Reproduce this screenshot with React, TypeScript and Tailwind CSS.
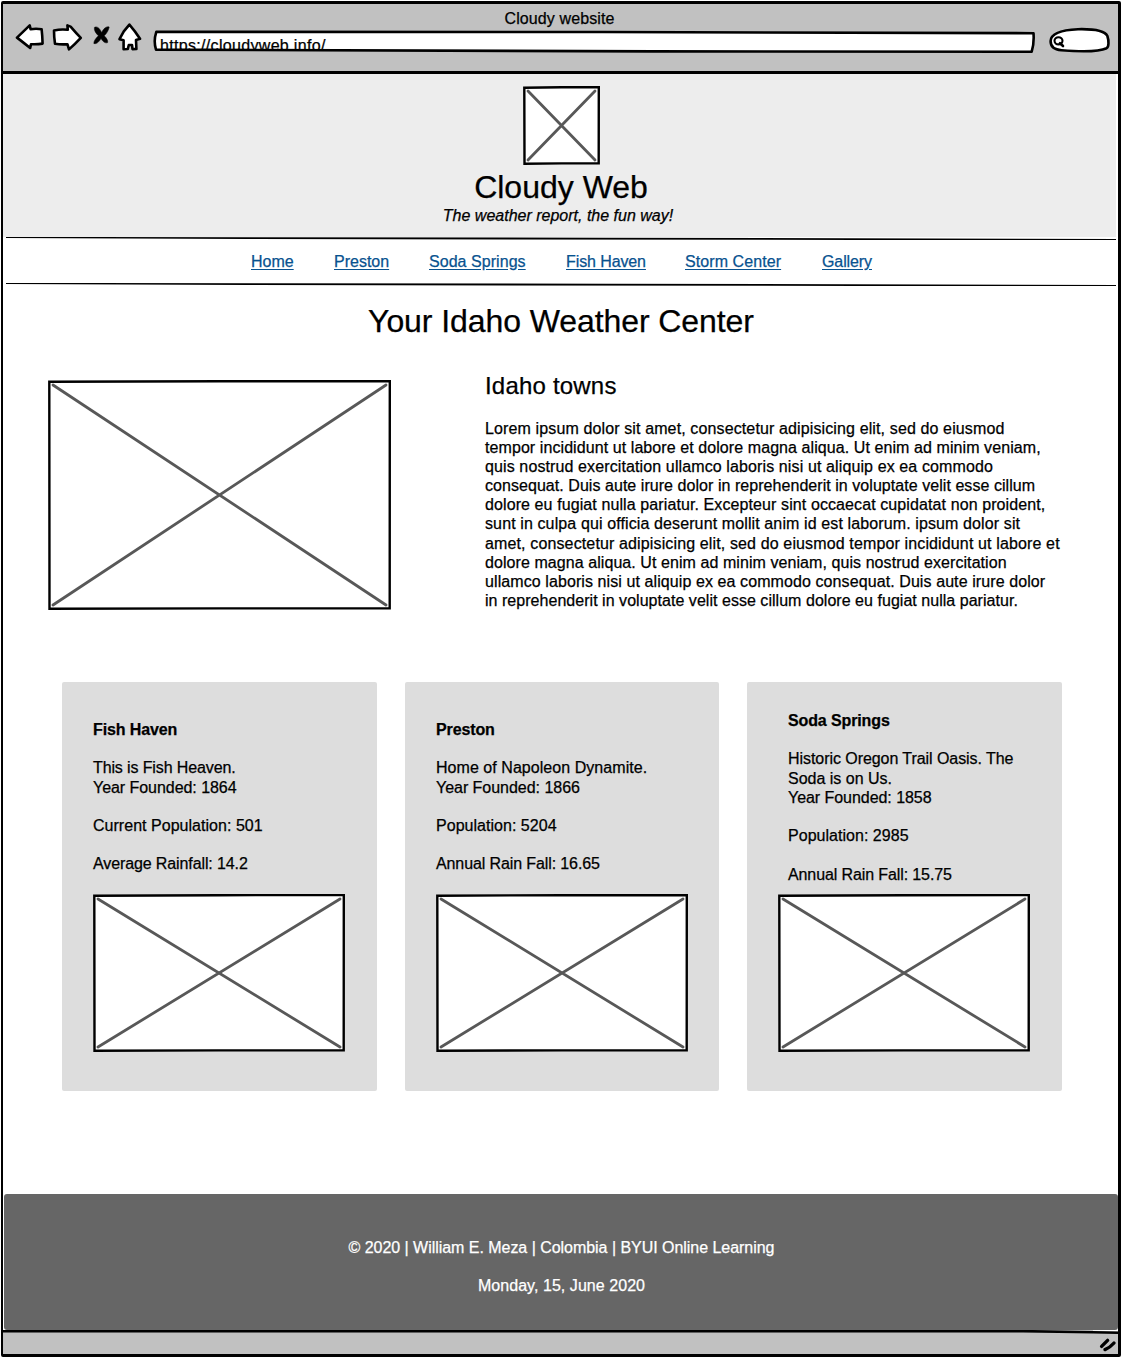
import React from "react";

const ink = { stroke: "#000", strokeWidth: 2.6, strokeLinejoin: "round", strokeLinecap: "round" } as const;

function Placeholder({ w, h, className = "" }: { w: number; h: number; className?: string }) {
  return (
    <svg width={w} height={h} viewBox={`0 0 ${w} ${h}`} className={`block shrink-0 ${className}`}>
      <path
        d={`M1.3 1.7 L${w / 2} 1.2 L${w - 1.2} 1.1 L${w - 1.3} ${h - 1.6} L${w / 2} ${h - 1.6} L1.5 ${h - 1.2} Z`}
        fill="#fff"
        stroke="#000"
        strokeWidth="2.4"
        strokeLinejoin="miter"
      />
      <path
        d={`M5 5 L${w - 5} ${h - 5} M${w - 5} 5 L5 ${h - 5}`}
        stroke="#585858"
        strokeWidth="2.8"
        strokeLinecap="round"
      />
    </svg>
  );
}

function Rule() {
  return (
    <svg width="1110" height="4" viewBox="0 0 1110 4" className="ml-[3px] block shrink-0">
      <path d="M0 0 L90 0 L600 0.7 L1110 1.9 L1110 3 L850 3 L240 2 L0 1 Z" fill="#000" />
    </svg>
  );
}

function Chrome() {
  return (
    <div className="h-[70px] shrink-0 border-b-[3px] border-black bg-[#c1c1c1]">
      <div className="flex h-6 items-end justify-center pr-0.5 text-base leading-[18px] tracking-[.1px]">
        Cloudy website
      </div>
      <div className="flex h-[34px] items-start">
        <svg width="29" height="30" viewBox="0 0 29 30" className="ml-3 -mt-1 block">
          <path d="M2 13.6 L14.7 1.4 L15.6 5.2 Q21 4.2 26.6 5.2 Q27.4 12 27.6 19.6 Q22 20.6 16 20.2 L15.2 24 Q9 19 2 13.6 Z" fill="#fff" {...ink} />
        </svg>
        <svg width="31" height="30" viewBox="0 0 31 30" className="ml-2 -mt-1 block">
          <path d="M2 6.4 Q9 5 15.8 5.8 L15.4 1.4 L18.6 2.6 Q24 9 28.8 13.8 Q23 20 17 25.4 L15.4 20.2 Q9 20.6 3 19.8 Q2 13 2 6.4 Z" fill="#fff" {...ink} />
        </svg>
        <svg width="19" height="21" viewBox="0 0 19 21" className="ml-[9px] -mt-[3px] block">
          <path d="M2.4 2.4 C5 .8 8 3.4 9.6 7.6 C11.4 3.4 14.8 .9 17.2 2 C16.6 5.4 14.6 8.6 12.2 10.8 C14.6 13 16.2 15.6 15.6 17.6 C13 18.6 10.8 16.4 9 13.6 C7 17 4.4 19.4 1.8 18.4 C1.8 15.8 4 13 6.4 10.8 C4 8.4 1.8 5.4 2.4 2.4 Z" fill="#000" stroke="#000" strokeWidth=".5" />
        </svg>
        <svg width="24" height="30" viewBox="0 0 24 30" className="ml-[7px] -mt-[5px] block">
          <path d="M11.4 1.6 Q17 8 22 15.8 L18 17 L18.4 26 L14.5 26.1 L14 22 L10.8 22 L9.8 26 L5.6 26.2 L5.6 17.2 L1.5 16.2 L5.8 8.4 Z" fill="#fff" {...ink} />
        </svg>
        <div className="relative ml-[11px] mt-px h-[25px] w-[883px]">
          <svg width="883" height="25" viewBox="0 0 883 25" className="absolute inset-0">
            <path d="M3.3 2.8 L450 3 L880.5 4.2 Q881.3 14 878.7 22.7 L500 22.4 L3 20.6 Q.3 12 3.3 2.8 Z" fill="#fff" {...ink} />
          </svg>
          <div className="relative ml-[7px] h-5 overflow-hidden pt-2 text-base leading-[18px] tracking-[.32px]">
            https://cloudyweb.info/
          </div>
        </div>
        <svg width="62" height="28" viewBox="0 0 62 28" className="ml-[13px] -mt-px block">
          <path d="M1.6 14 C1.8 6 12 3 29 2.2 C46 1.8 56 4 58.4 9 C60 14 59.9 20 57.6 21.2 C50 24.7 32 24.7 12.5 23.2 C6 22.7 1.5 19.7 1.6 14 Z" fill="#fff" {...ink} />
          <ellipse cx="9.5" cy="13.8" rx="4" ry="3.6" fill="#fff" stroke="#000" strokeWidth="2.1" />
          <path d="M11 16.2 L14 19" {...ink} />
        </svg>
      </div>
    </div>
  );
}

const links: [string, string][] = [
  ["Home", "ml-[248px] w-[43px]"],
  ["Preston", "ml-10 w-[55px]"],
  ["Soda Springs", "ml-10 w-[97px] tracking-[.05px]"],
  ["Fish Haven", "ml-10 w-[80px] tracking-[-.1px]"],
  ["Storm Center", "ml-[39px] w-[97px] tracking-[.08px]"],
  ["Gallery", "ml-10 w-[50px] tracking-[-.1px]"],
];

const story: [string, string][] = [
  ["Lorem ipsum dolor sit amet, consectetur adipisicing elit, sed do eiusmod", "tracking-[.125px]"],
  ["tempor incididunt ut labore et dolore magna aliqua. Ut enim ad minim veniam,", "tracking-[.08px]"],
  ["quis nostrud exercitation ullamco laboris nisi ut aliquip ex ea commodo", "tracking-[.115px]"],
  ["consequat. Duis aute irure dolor in reprehenderit in voluptate velit esse cillum", "tracking-[.05px]"],
  ["dolore eu fugiat nulla pariatur. Excepteur sint occaecat cupidatat non proident,", "tracking-[.1px]"],
  ["sunt in culpa qui officia deserunt mollit anim id est laborum. ipsum dolor sit", "tracking-[.115px]"],
  ["amet, consectetur adipisicing elit, sed do eiusmod tempor incididunt ut labore et", "tracking-[.134px]"],
  ["dolore magna aliqua. Ut enim ad minim veniam, quis nostrud exercitation", "tracking-[.07px]"],
  ["ullamco laboris nisi ut aliquip ex ea commodo consequat. Duis aute irure dolor", "tracking-[.09px]"],
  ["in reprehenderit in voluptate velit esse cillum dolore eu fugiat nulla pariatur.", "tracking-[.035px]"],
];

const towns = [
  {
    name: "Fish Haven",
    about: [["This is Fish Heaven.", "tracking-[-.12px]"], ["Year Founded: 1864", "tracking-[-.05px]"]],
    population: "Current Population: 501",
    rain: "Average Rainfall: 14.2",
    pad: "pl-[31px] pt-[38px]",
  },
  {
    name: "Preston",
    about: [["Home of Napoleon Dynamite.", "tracking-[.05px]"], ["Year Founded: 1866", "tracking-[-.03px]"]],
    population: "Population: 5204",
    rain: "Annual Rain Fall: 16.65",
    pad: "pl-[31.5px] pt-[38px]",
  },
  {
    name: "Soda Springs",
    about: [
      ["Historic Oregon Trail Oasis. The", "tracking-[-.06px]"],
      ["Soda is on Us.", ""],
      ["Year Founded: 1858", "tracking-[-.05px]"],
    ],
    population: "Population: 2985",
    rain: "Annual Rain Fall: 15.75",
    pad: "pl-[41px] pt-[29px]",
  },
];

export default function App() {
  return (
    <div className="h-[1358px] w-[1122px] bg-white p-px font-['Liberation_Sans',Arial,sans-serif] text-base text-black [-webkit-text-stroke:0.25px]">
      <div className="flex h-[1356px] w-[1120px] flex-col rounded-[2px] border-[3px] border-l-2 border-black whitespace-nowrap">
        <Chrome />
        <header className="flex h-[163px] w-[1113px] shrink-0 flex-col items-center bg-[#ededed] pt-3">
          <Placeholder w={77} h={79} className="ml-1" />
          <h1 className="mt-[3px] ml-[3px] text-[32px] leading-[38px]">Cloudy Web</h1>
          <p className="mr-[3px] leading-[19px] italic">The weather report, the fun way!</p>
        </header>
        <Rule />
        <nav className="flex h-[42px] shrink-0 items-center pb-px">
          {links.map(([label, box]) => (
            <a key={label} href="#" className={`${box} shrink-0 text-[#08528f] underline underline-offset-2`}>
              {label}
            </a>
          ))}
        </nav>
        <Rule />
        <main className="ml-px flex h-[907px] shrink-0 flex-col">
          <h2 className="mt-[15px] text-center text-[32px] leading-[38px] tracking-[-.08px]">Your Idaho Weather Center</h2>
          <section className="mt-[31px] flex h-[311px] shrink-0">
            <Placeholder w={343} h={230} className="ml-[44px] mt-[9px]" />
            <div className="ml-[94px]">
              <h3 className="text-2xl leading-[29px] tracking-[.2px]">Idaho towns</h3>
              <p className="mt-[19px] leading-[19.1px]">
                {story.map(([line, tracking]) => (
                  <span key={line} className={`block ${tracking}`}>{line}</span>
                ))}
              </p>
            </div>
          </section>
          <section className="ml-[58px] flex gap-7">
            {towns.map((t) => (
              <article key={t.name} className="h-[408.5px] w-[314.5px] shrink-0 rounded-[2px] bg-[#dddddd]">
                <div className={`${t.pad} h-[212px] leading-[19.2px]`}>
                  <h4 className="font-bold tracking-[-.12px]">{t.name}</h4>
                  <p className="mt-[19.2px]">
                    {t.about.map(([line, tracking]) => (
                      <span key={line} className={`block ${tracking}`}>{line}</span>
                    ))}
                  </p>
                  <p className="mt-[19.2px] tracking-[.03px]">{t.population}</p>
                  <p className="mt-[19.2px] tracking-[-.11px]">{t.rain}</p>
                </div>
                <Placeholder w={252} h={158} className="ml-[31px]" />
              </article>
            ))}
          </section>
        </main>
        <footer className="ml-px h-[136px] shrink-0 rounded-[3px] bg-[#666666] pt-11 pl-px text-center leading-[19px] text-white">
          <p className="tracking-[-.035px]">© 2020 | William E. Meza | Colombia | BYUI Online Learning</p>
          <p className="mt-[19px] tracking-[.05px]">Monday, 15, June 2020</p>
        </footer>
        <div className="flex flex-1 items-start justify-between bg-[#c1c1c1]">
          <svg width="1090" height="5" viewBox="0 0 1090 5" className="block shrink-0">
            <path d="M0 0 H1030 L1090 1 V3.6 L1020 2.4 H0 Z" fill="#000" />
          </svg>
          <svg width="25" height="24" viewBox="0 0 25 24" className="block shrink-0">
            <path d="M0 0 H25 V1.2 L0 .8 Z" fill="#fff" />
            <path d="M0 1 L25 1.4 V4 L0 3.6 Z" fill="#000" />
            <path d="M8.6 16.4 L14.6 10.4 M12 19.6 Q17 17.6 21 13" fill="none" stroke="#000" strokeWidth="3.4" strokeLinecap="round" />
          </svg>
        </div>
      </div>
    </div>
  );
}
